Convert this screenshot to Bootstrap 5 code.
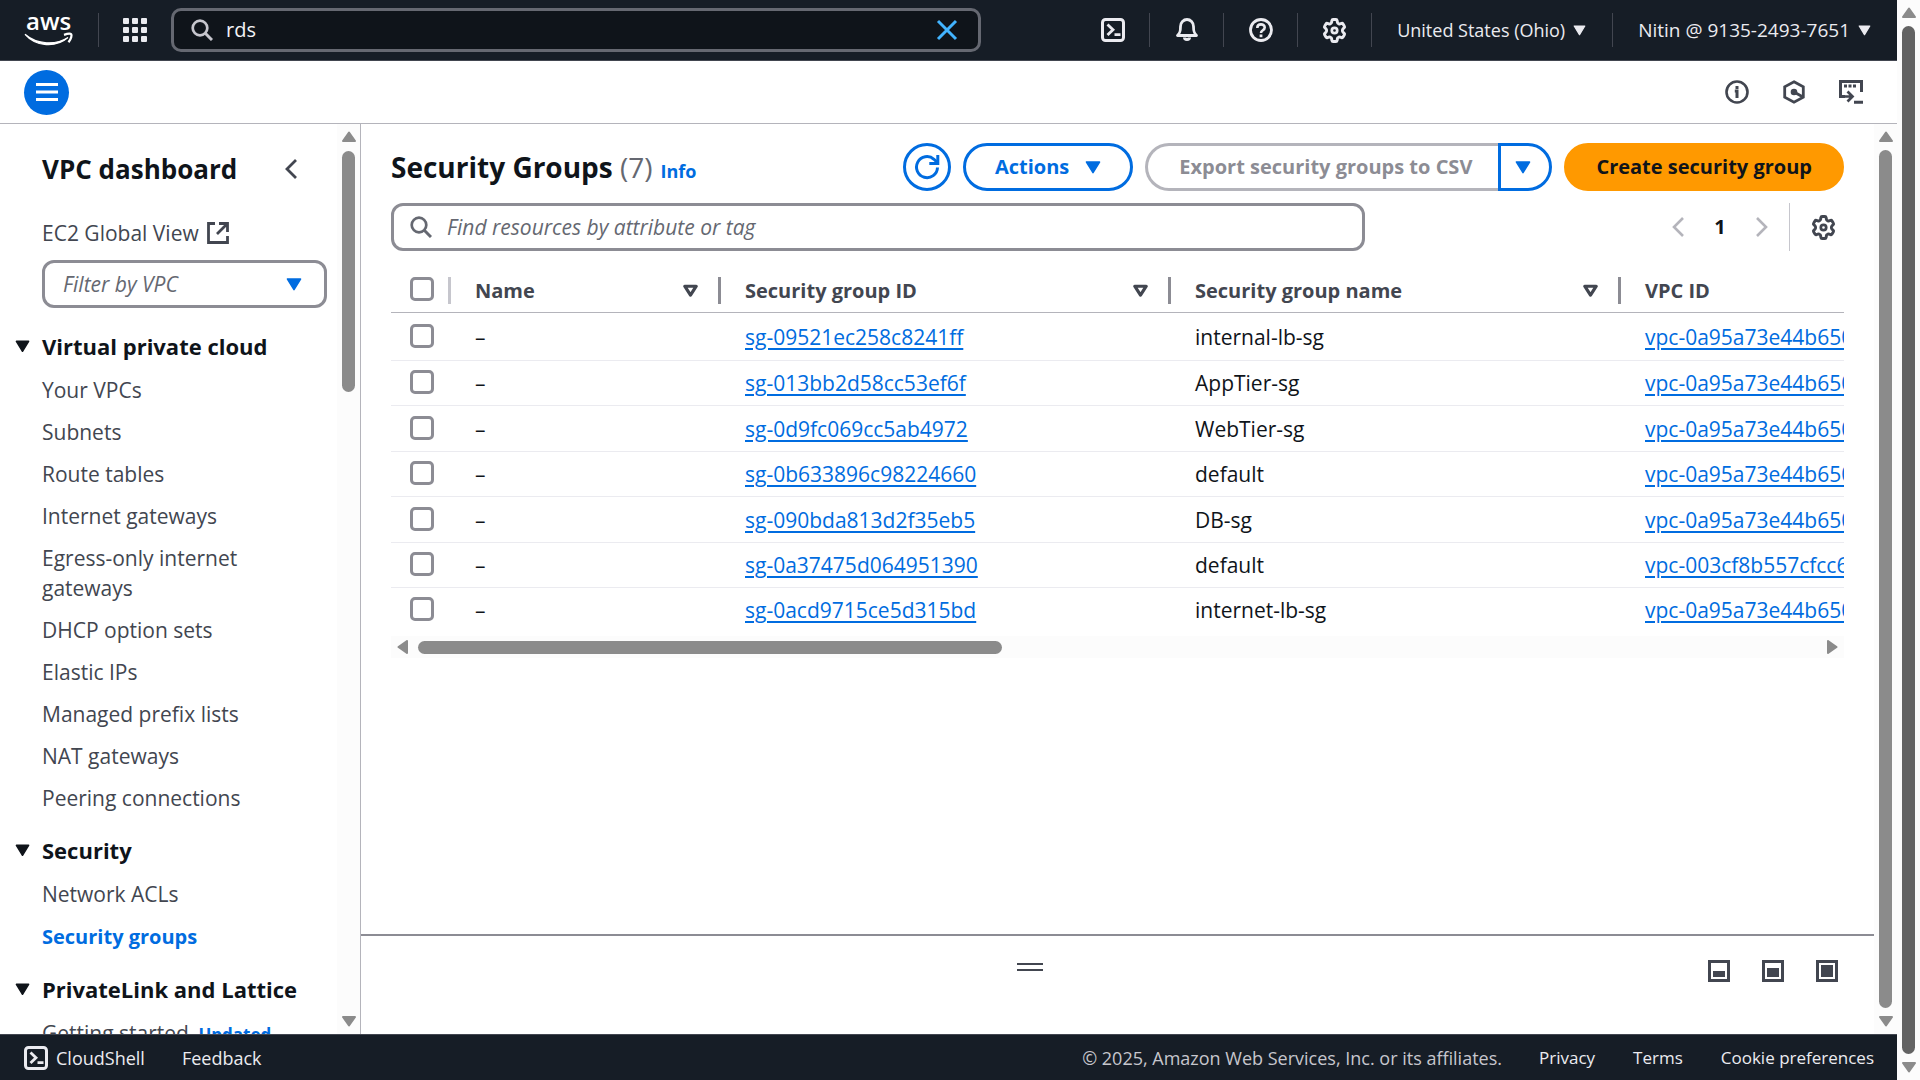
<!DOCTYPE html>
<html lang="en">
<head>
<meta charset="utf-8">
<meta name="viewport" content="width=device-width, initial-scale=1">
<title>Security Groups | VPC Console</title>
<link href="https://cdn.jsdelivr.net/npm/bootstrap@5.3.0/dist/css/bootstrap.min.css" rel="stylesheet">
<style>
:root { --ink:#0f141a; --slate:#424650; --muted:#656871; --line:#8c8c94; --blue:#006ce0; --night:#161d26; --soft:#ebebf0; }
body { font-family:"Open Sans","Noto Sans",sans-serif; font-size:21px; line-height:30px; color:var(--ink); background:#fff; overflow:hidden; }
svg { display:block; flex:none; }
button { font:inherit; color:inherit; background:none; border:0; padding:0; }
input::placeholder { color:var(--muted); font-style:italic; opacity:1; }
input:focus { outline:0; }
/* top bar */
.topbar { background:var(--night); color:#ebebf0; height:61px; border-bottom:1px solid #424650; font-size:18px; }
.topbar .sep { width:1px; height:34px; background:#424650; flex:none; }
.top-search { width:810px; height:44px; border:3px solid #656871; border-radius:10px; background:#0f141a; padding:0 20px 0 17px; }
.top-search input { background:none; border:0; color:#f3f3f7; font-size:20px; min-width:0; padding:0; margin-left:13px; }
.logo svg { overflow:visible; }
.slot { width:73px; display:flex; justify-content:center; }
.account { gap:8px; padding:0 26px 0 25px; }
.account.user { font-size:19px; }
/* tool strip */
.strip { height:63px; border-bottom:1px solid #b4b4bb; }
.strip-tools { color:var(--slate); gap:34px; padding-right:33px; }
.burger { width:45px; height:45px; background:var(--blue); color:#fff; }
/* side navigation */
.side { width:361px; border-right:1px solid #b4b4bb; }
.side a { color:var(--slate); text-decoration:none; }
.side-body { padding:30px 10px 0 42px; overflow:hidden; }
.side-head { margin-bottom:34px; }
.side h2 { font-size:26px; line-height:30px; font-weight:700; }
.side h3 { font-size:22px; line-height:30px; font-weight:700; margin:0 0 14px -27px; gap:12px; }
.side li { margin-bottom:12px; max-width:240px; }
.side ul { margin-bottom:22px; }
.side a.current { color:var(--blue); font-size:20px; font-weight:700; }
.side .tag-new { font-size:17px; font-weight:700; color:var(--blue); }
.vpc-filter { height:48px; border:3px solid var(--line); border-radius:12px; padding:0 22px 0 18px; margin:12px 0 23px; }
.vpc-filter select { appearance:none; border:0; background:none; color:var(--muted); font-style:italic; padding:0; outline:0; }
/* scroll tracks */
.track { width:23px; background:#fcfcfc; color:#8b8b8b; padding:7px 0; flex:none; }
.track .thumb { width:13px; border-radius:7px; background:#8b8b8b; }
.track.dark .thumb { background:#636363; }
.htrack { height:22px; background:#fcfcfc; color:#8b8b8b; padding:0 6px; gap:10px; margin-top:4px; }
.htrack .thumb { width:584px; height:13px; border-radius:7px; background:#8b8b8b; }
/* content */
.content-pad { padding:19px 30px 0 30px; }
h1 { font-size:28px; line-height:36px; font-weight:700; }
h1 .tally { font-weight:400; color:var(--muted); }
.tools { gap:12px; }
.info-link { font-size:18px; color:var(--blue); }
.pill { height:48px; border:3px solid var(--blue); border-radius:24px; color:var(--blue); font-size:20px; font-weight:700; padding:0 29px; display:flex; align-items:center; justify-content:center; white-space:nowrap; }
.pill.round { width:48px; padding:0; }
.pill.off { border-color:#b4b4bb; border-right:0; border-radius:24px 0 0 24px; color:var(--line); padding:0 26px 0 31px; }
.pill.tail { border-radius:0 24px 24px 0; width:54px; padding:0 5px 0 0; }
.pill.cta { background:#f90; border-color:#f90; color:var(--ink); padding:0 29px; }
.find-row { margin-top:12px; }
.find { width:67%; height:48px; border:3px solid var(--line); border-radius:12px; padding:0 16px; gap:15px; }
.find input { border:0; padding:0; min-width:0; }
.pager { color:var(--slate); font-size:20px; padding-right:8px; }
.page-no { width:72px; color:var(--ink); }
.pager .sep { width:1px; height:48px; background:#c6c6cd; margin:0 21px; }
.sheet { overflow:hidden; }
.sg-table { table-layout:fixed; width:1700px; border-collapse:separate; border-spacing:0; }
.sg-table th { height:62px; border-bottom:1px solid #b4b4bb; color:var(--slate); font-size:20px; font-weight:700; padding:18px 0 0 0; }
.sg-table .cell { height:27px; border-right:3px solid var(--line); margin-left:24px; padding-right:19px; display:flex; align-items:center; justify-content:space-between; white-space:nowrap; }
.sg-table td { height:46px; padding:0 0 0 24px; border-bottom:1px solid var(--soft); white-space:nowrap; }
.sg-table tr:nth-child(even) td { height:45px; }
.sg-table tbody tr:first-child td { height:48px; }
.sg-table tbody tr:last-child td { border-bottom:0; height:44px; }
.sg-table a { color:var(--blue); text-decoration-thickness:2px; text-underline-offset:3px; }
.sg-table td.pick { padding:0 0 2px 19px; }
.pick-head { height:27px; margin-left:19px; border-right:3px solid #c6c6cd; display:flex; align-items:flex-start; }
.form-check-input.tick { display:block; width:24px; height:24px; margin:0; border:3px solid var(--line); border-radius:5px; }
.split { height:100px; border-top:2px solid var(--line); color:var(--slate); }
.grip { width:26px; height:8px; border:solid var(--slate); border-width:2px 0; margin:27px auto 0; }
.panel-icons { gap:32px; padding:24px 36px 0 10px; align-items:flex-start; }
/* footer */
.bottom { height:46px; background:var(--night); border-top:1px solid #424650; color:#ebebf0; font-size:18px; padding:0 23px 0 24px; gap:37px; }
.bottom a { color:inherit; text-decoration:none; }
.bottom .legal { color:#c6c6cd; }
.policy-links { gap:38px; font-size:17px; }
</style>
</head>
<body>
<svg width="0" height="0" class="position-absolute" aria-hidden="true">
  <symbol id="down" viewBox="0 0 16 13"><path d="M1.5 1h13L8 11.6z" fill="currentColor" stroke="currentColor" stroke-width="1.6" stroke-linejoin="round"/></symbol>
  <symbol id="sort" viewBox="0 0 16 13"><path d="M2.6 2h10.8L8 10.4z" fill="none" stroke="currentColor" stroke-width="3" stroke-linejoin="round"/></symbol>
  <symbol id="lens" viewBox="0 0 22 22"><circle cx="9" cy="9" r="7.3" fill="none" stroke="currentColor" stroke-width="2.7"/><path d="M14 14l7 7" stroke="currentColor" stroke-width="3"/></symbol>
  <symbol id="gear" viewBox="0 0 24 24"><path d="M9.500 2.500Q9.700 1.500 10.600 1.500h2.800q.9 0 1.100 1l.3 1.700q.1.700.7 1l.7.4q.6.300 1.200.1l1.400-.5q.9-.3 1.400.5l1.300 2.200q.5.800-.2 1.500l-1.200 1.100q-.5.500-.5 1.500t.5 1.500l1.200 1.100q.7.700.2 1.500l-1.300 2.200q-.5.800-1.400.5l-1.400-.5q-.6-.2-1.200.1l-.7.4q-.6.300-.7 1l-.3 1.700q-.2 1-1.100 1h-2.800q-.9 0-1.100-1l-.3-1.700q-.1-.7-.7-1l-.7-.4q-.6-.3-1.200-.1l-1.400.5q-.9.300-1.400-.5l-1.300-2.200q-.5-.8.2-1.500l1.200-1.100q.5-.5.5-1.500t-.5-1.500L2.700 9.400q-.7-.7-.2-1.500l1.300-2.200q.5-.8 1.400-.5l1.400.5q.6.200 1.200-.1l.7-.4q.6-.3.7-1z" fill="none" stroke="currentColor" stroke-width="2.800" stroke-linejoin="round"/><circle cx="12" cy="12" r="2.600" fill="none" stroke="currentColor" stroke-width="2.600"/></symbol>
  <symbol id="shell" viewBox="0 0 24 24"><rect x="1.500" y="1.500" width="21" height="21" rx="3" fill="none" stroke="currentColor" stroke-width="3"/><path d="M6.500 6.500l5.500 5.300-5.500 5.300M13.500 16.700h6" fill="none" stroke="currentColor" stroke-width="2.800"/></symbol>
  <symbol id="arrow-up" viewBox="0 0 14 11"><path d="M7 1.500L13 10H1z" fill="currentColor" stroke="currentColor" stroke-width="2" stroke-linejoin="round"/></symbol>
  <symbol id="arrow-dn" viewBox="0 0 14 11"><path d="M7 9.500L13 1H1z" fill="currentColor" stroke="currentColor" stroke-width="2" stroke-linejoin="round"/></symbol>
</svg>

<div class="d-flex vh-100">
<div class="d-flex flex-column flex-grow-1 overflow-hidden">

<header class="topbar d-flex align-items-center flex-shrink-0">
  <a href="#" class="logo ms-4" aria-label="AWS home">
    <svg width="50" height="36" viewBox="0 0 50 36"><text x="2" y="18" font-family="Open Sans, sans-serif" font-size="24" font-weight="600" fill="#fff">aws</text><path d="M1 22.300c12 10.500 31 11 43 3.200-12 10.500-32 9.500-43-3.200z" fill="#fff" stroke="#fff" stroke-width="1.200"/><path d="M40 22.800c4-1.300 6.500-1.300 7.200-.5s.2 4.500-2.700 8" fill="none" stroke="#fff" stroke-width="2.300"/></svg>
  </a>
  <span class="sep ms-4"></span>
  <button type="button" class="ms-4" aria-label="Services">
    <svg width="24" height="24" viewBox="0 0 24 24" fill="#ebebf0"><rect width="6" height="6" rx="1"/><rect x="9" width="6" height="6" rx="1"/><rect x="18" width="6" height="6" rx="1"/><rect y="9" width="6" height="6" rx="1"/><rect x="9" y="9" width="6" height="6" rx="1"/><rect x="18" y="9" width="6" height="6" rx="1"/><rect y="18" width="6" height="6" rx="1"/><rect x="9" y="18" width="6" height="6" rx="1"/><rect x="18" y="18" width="6" height="6" rx="1"/></svg>
  </button>
  <div class="top-search d-flex align-items-center ms-4">
    <svg width="22" height="22" style="color:#c6c6cd"><use href="#lens"/></svg>
    <input type="text" value="rds" aria-label="Search" class="flex-grow-1">
    <button type="button" aria-label="Clear"><svg width="22" height="22" viewBox="0 0 22 22"><path d="M2 2l18 18M20 2L2 20" stroke="#42b4ff" stroke-width="3"/></svg></button>
  </div>
  <div class="d-flex align-items-center ms-auto">
    <button type="button" class="slot" aria-label="CloudShell"><svg width="24" height="24"><use href="#shell"/></svg></button><span class="sep"></span>
    <button type="button" class="slot" aria-label="Notifications"><svg width="24" height="24" viewBox="0 0 24 24"><path d="M2.500 17.500h19c-2.500-2.500-3-4-3-9 0-4-3-7-6.500-7s-6.500 3-6.500 7c0 5-.5 6.500-3 9z" fill="none" stroke="currentColor" stroke-width="2.800" stroke-linejoin="round"/><path d="M9.500 19.500c0 2.500 5 2.500 5 0" fill="none" stroke="currentColor" stroke-width="3"/></svg></button><span class="sep"></span>
    <button type="button" class="slot" aria-label="Help"><svg width="24" height="24" viewBox="0 0 24 24" fill="none" stroke="currentColor" stroke-width="2.800"><circle cx="12" cy="12" r="10.500"/><path d="M8.300 10c0-5 7.400-4.600 7.400-.5 0 3-3.700 2.500-3.700 5.500" stroke-width="2.600"/><path d="M12 16.500v2.700"/></svg></button><span class="sep"></span>
    <button type="button" class="slot" aria-label="Settings"><svg width="25" height="25"><use href="#gear"/></svg></button><span class="sep"></span>
    <button type="button" class="account d-flex align-items-center text-nowrap">United States (Ohio)<svg width="13" height="11"><use href="#down"/></svg></button><span class="sep"></span>
    <button type="button" class="account user d-flex align-items-center text-nowrap">Nitin @ 9135-2493-7651<svg width="13" height="11"><use href="#down"/></svg></button>
  </div>
</header>

<div class="strip d-flex align-items-center justify-content-between flex-shrink-0 ps-4">
  <button type="button" class="burger rounded-circle d-flex align-items-center justify-content-center" aria-label="Toggle navigation">
    <svg width="22" height="18" viewBox="0 0 22 18"><path d="M0 1.500h22M0 9h22M0 16.500h22" stroke="#fff" stroke-width="3"/></svg>
  </button>
  <div class="strip-tools d-flex align-items-center">
    <button type="button" aria-label="Info"><svg width="24" height="24" viewBox="0 0 24 24" fill="none" stroke="currentColor" stroke-width="2.600"><circle cx="12" cy="12" r="10.500"/><path d="M12 6v3M9.800 11H12v7" stroke-width="3"/></svg></button>
    <button type="button" aria-label="Amazon Q"><svg width="22" height="24" viewBox="0 0 22 24" fill="none" stroke="currentColor" stroke-width="2.800"><path d="M11 1.800l9.300 5v10.400l-9.300 5-9.300-5V6.800z"/><circle cx="11" cy="12" r="3.300" fill="currentColor" stroke="none"/><path d="M11 12l9 5"/></svg></button>
    <button type="button" aria-label="Shell panel"><svg width="25" height="24" viewBox="0 0 25 24" fill="none" stroke="currentColor" stroke-width="3"><path d="M6 16.500H1.500v-15h21V12M15 22.300h9"/><path d="M5 6h3M9.500 6h3M14 6h3"/><path d="M6 16.500h7M8.500 11.500l5 5-5 5" stroke-width="2.700"/></svg></button>
  </div>
</div>

<div class="d-flex flex-grow-1 overflow-hidden">
  <nav class="side d-flex flex-shrink-0" aria-label="VPC">
    <div class="side-body flex-grow-1">
      <div class="side-head d-flex align-items-center justify-content-between pe-4">
        <h2 class="mb-0">VPC dashboard</h2>
        <button type="button" aria-label="Collapse" class="pe-1"><svg width="14" height="20" viewBox="0 0 14 20"><path d="M11 1L2 10l9 9" fill="none" stroke="#424650" stroke-width="2.800"/></svg></button>
      </div>
      <a href="#" class="d-flex align-items-center gap-2">EC2 Global View<svg width="22" height="22" viewBox="0 0 22 22" fill="none" stroke="currentColor" stroke-width="2.800"><path d="M8 1.500H1.500v19h19V14M12 1.500h8.500V10M20 2L10 12"/></svg></a>
      <div class="vpc-filter d-flex align-items-center">
        <select class="flex-grow-1" aria-label="Filter by VPC"><option>Filter by VPC</option></select>
        <svg width="16" height="13" style="color:#006ce0"><use href="#down"/></svg>
      </div>
      <h3 class="d-flex align-items-center"><svg width="15" height="13"><use href="#down"/></svg>Virtual private cloud</h3>
      <ul class="list-unstyled">
        <li><a href="#">Your VPCs</a></li><li><a href="#">Subnets</a></li><li><a href="#">Route tables</a></li><li><a href="#">Internet gateways</a></li><li><a href="#">Egress-only internet gateways</a></li><li><a href="#">DHCP option sets</a></li><li><a href="#">Elastic IPs</a></li><li><a href="#">Managed prefix lists</a></li><li><a href="#">NAT gateways</a></li><li><a href="#">Peering connections</a></li>
      </ul>
      <h3 class="d-flex align-items-center"><svg width="15" height="13"><use href="#down"/></svg>Security</h3>
      <ul class="list-unstyled">
        <li><a href="#">Network ACLs</a></li><li><a href="#" class="current">Security groups</a></li>
      </ul>
      <h3 class="d-flex align-items-center text-nowrap"><svg width="15" height="13"><use href="#down"/></svg>PrivateLink and Lattice</h3>
      <ul class="list-unstyled">
        <li class="text-nowrap"><a href="#">Getting started</a> <span class="tag-new ms-1">Updated</span></li>
      </ul>
    </div>
    <div class="track d-flex flex-column align-items-center">
      <svg width="14" height="11"><use href="#arrow-up"/></svg>
      <div class="thumb" style="height:241px;margin-top:9px"></div>
      <svg class="mt-auto" width="14" height="11"><use href="#arrow-dn"/></svg>
    </div>
  </nav>

  <main class="d-flex flex-column flex-grow-1 overflow-hidden">
    <div class="content-pad flex-grow-1">
      <div class="d-flex align-items-center justify-content-between">
        <div class="d-flex align-items-baseline text-nowrap">
          <h1 class="mb-0">Security Groups <span class="tally">(7)</span></h1>
          <a href="#" class="info-link ms-2 fw-bold text-decoration-none">Info</a>
        </div>
        <div class="tools d-flex">
          <button type="button" class="pill round" aria-label="Refresh"><svg width="26" height="26" viewBox="0 0 26 26" fill="none" stroke="currentColor" stroke-width="3"><path d="M23.500 13.500A10.500 10.500 0 1 1 20 5.300l3 3"/><path d="M23.800 1v8.500h-8.500"/></svg></button>
          <button type="button" class="pill">Actions<svg class="ms-3" width="16" height="13"><use href="#down"/></svg></button>
          <div class="d-flex"><button type="button" class="pill off" disabled>Export security groups to CSV</button><button type="button" class="pill tail" aria-label="More exports"><svg width="16" height="13"><use href="#down"/></svg></button></div>
          <button type="button" class="pill cta">Create security group</button>
        </div>
      </div>
      <div class="find-row d-flex align-items-center justify-content-between">
        <div class="find d-flex align-items-center">
          <svg width="22" height="22" style="color:#656871"><use href="#lens"/></svg>
          <input type="text" class="flex-grow-1" placeholder="Find resources by attribute or tag" aria-label="Find resources">
        </div>
        <div class="pager d-flex align-items-center">
          <button type="button" aria-label="Previous page"><svg width="12" height="20" viewBox="0 0 12 20"><path d="M11 1L2 10l9 9" fill="none" stroke="#b4b4bb" stroke-width="2.600"/></svg></button>
          <button type="button" class="page-no fw-bold">1</button>
          <button type="button" aria-label="Next page"><svg width="12" height="20" viewBox="0 0 12 20"><path d="M1 1l9 9-9 9" fill="none" stroke="#b4b4bb" stroke-width="2.600"/></svg></button>
          <span class="sep"></span>
          <button type="button" aria-label="Preferences"><svg width="25" height="25"><use href="#gear"/></svg></button>
        </div>
      </div>
      <div class="sheet">
        <table class="sg-table">
          <colgroup><col style="width:60px"><col style="width:270px"><col style="width:450px"><col style="width:450px"><col></colgroup>
          <thead><tr>
            <th><div class="pick-head"><input type="checkbox" class="form-check-input tick" aria-label="Select all"></div></th>
            <th><div class="cell">Name<svg width="17" height="14"><use href="#sort"/></svg></div></th>
            <th><div class="cell">Security group ID<svg width="17" height="14"><use href="#sort"/></svg></div></th>
            <th><div class="cell">Security group name<svg width="17" height="14"><use href="#sort"/></svg></div></th>
            <th><div class="cell">VPC ID</div></th>
          </tr></thead>
          <tbody>
            <tr><td class="pick"><input type="checkbox" class="form-check-input tick" aria-label="Select internal-lb-sg"></td><td>–</td><td><a href="#">sg-09521ec258c8241ff</a></td><td>internal-lb-sg</td><td><a href="#">vpc-0a95a73e44b650</a></td></tr>
            <tr><td class="pick"><input type="checkbox" class="form-check-input tick" aria-label="Select AppTier-sg"></td><td>–</td><td><a href="#">sg-013bb2d58cc53ef6f</a></td><td>AppTier-sg</td><td><a href="#">vpc-0a95a73e44b650</a></td></tr>
            <tr><td class="pick"><input type="checkbox" class="form-check-input tick" aria-label="Select WebTier-sg"></td><td>–</td><td><a href="#">sg-0d9fc069cc5ab4972</a></td><td>WebTier-sg</td><td><a href="#">vpc-0a95a73e44b650</a></td></tr>
            <tr><td class="pick"><input type="checkbox" class="form-check-input tick" aria-label="Select default"></td><td>–</td><td><a href="#">sg-0b633896c98224660</a></td><td>default</td><td><a href="#">vpc-0a95a73e44b650</a></td></tr>
            <tr><td class="pick"><input type="checkbox" class="form-check-input tick" aria-label="Select DB-sg"></td><td>–</td><td><a href="#">sg-090bda813d2f35eb5</a></td><td>DB-sg</td><td><a href="#">vpc-0a95a73e44b650</a></td></tr>
            <tr><td class="pick"><input type="checkbox" class="form-check-input tick" aria-label="Select default"></td><td>–</td><td><a href="#">sg-0a37475d064951390</a></td><td>default</td><td><a href="#">vpc-003cf8b557cfcc6</a></td></tr>
            <tr><td class="pick"><input type="checkbox" class="form-check-input tick" aria-label="Select internet-lb-sg"></td><td>–</td><td><a href="#">sg-0acd9715ce5d315bd</a></td><td>internet-lb-sg</td><td><a href="#">vpc-0a95a73e44b650</a></td></tr>
          </tbody>
        </table>
      </div>
      <div class="htrack d-flex align-items-center">
        <svg width="11" height="14" viewBox="0 0 11 14"><path d="M1.500 7L10 1v12z" fill="currentColor" stroke="currentColor" stroke-width="2" stroke-linejoin="round"/></svg>
        <div class="thumb"></div>
        <svg class="ms-auto" width="11" height="14" viewBox="0 0 11 14"><path d="M9.500 7L1 1v12z" fill="currentColor" stroke="currentColor" stroke-width="2" stroke-linejoin="round"/></svg>
      </div>
    </div>
    <div class="split d-flex flex-shrink-0">
      <div class="flex-grow-1"><div class="grip"></div></div>
      <div class="panel-icons d-flex">
        <button type="button" aria-label="Small panel"><svg width="22" height="22" viewBox="0 0 22 22"><rect x="1.500" y="1.500" width="19" height="19" fill="none" stroke="currentColor" stroke-width="3"/><rect x="5" y="11" width="12" height="6" fill="currentColor"/></svg></button>
        <button type="button" aria-label="Medium panel"><svg width="22" height="22" viewBox="0 0 22 22"><rect x="1.500" y="1.500" width="19" height="19" fill="none" stroke="currentColor" stroke-width="3"/><rect x="5" y="8" width="12" height="9" fill="currentColor"/></svg></button>
        <button type="button" aria-label="Full panel"><svg width="22" height="22" viewBox="0 0 22 22"><rect x="1.500" y="1.500" width="19" height="19" fill="none" stroke="currentColor" stroke-width="3"/><rect x="5" y="5" width="12" height="12" fill="currentColor"/></svg></button>
      </div>
    </div>
  </main>
  <div class="track d-flex flex-column align-items-center">
    <svg width="14" height="11"><use href="#arrow-up"/></svg>
    <div class="thumb flex-grow-1 my-2"></div>
    <svg width="14" height="11"><use href="#arrow-dn"/></svg>
  </div>
</div>

<footer class="bottom d-flex align-items-center flex-shrink-0 text-nowrap">
  <a href="#" class="d-flex align-items-center gap-2"><svg width="24" height="24"><use href="#shell"/></svg>CloudShell</a>
  <a href="#">Feedback</a>
  <span class="legal ms-auto">© 2025, Amazon Web Services, Inc. or its affiliates.</span>
  <div class="policy-links d-flex"><a href="#">Privacy</a><a href="#">Terms</a><a href="#">Cookie preferences</a></div>
</footer>
</div>

<div class="track dark d-flex flex-column align-items-center">
  <svg width="14" height="11"><use href="#arrow-up"/></svg>
  <div class="thumb flex-grow-1 my-2"></div>
  <svg width="14" height="11"><use href="#arrow-dn"/></svg>
</div>
</div>
<script src="https://cdn.jsdelivr.net/npm/bootstrap@5.3.0/dist/js/bootstrap.bundle.min.js"></script>
</body>
</html>
